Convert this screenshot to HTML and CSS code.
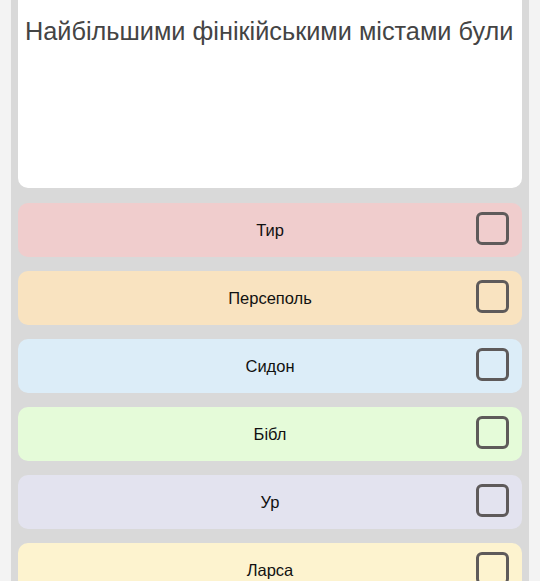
FILE: index.html
```html
<!DOCTYPE html>
<html lang="uk">
<head>
    <meta charset="UTF-8">
    <meta name="viewport" content="width=device-width, initial-scale=1.0">
    <title>Питання</title>
    <link rel="stylesheet" href="styles.css">
</head>
<body>

    <div class="panel">
        <div class="question">
            <p>Найбільшими фінікійськими містами були</p>
        </div>

        <div class="answers">
            <div class="answer red">
                <span>Тир</span>
                <i class="check"></i>
            </div>
            <div class="answer orange">
                <span>Персеполь</span>
                <i class="check"></i>
            </div>
            <div class="answer blue">
                <span>Сидон</span>
                <i class="check"></i>
            </div>
            <div class="answer green">
                <span>Бібл</span>
                <i class="check"></i>
            </div>
            <div class="answer purple">
                <span>Ур</span>
                <i class="check"></i>
            </div>
            <div class="answer yellow">
                <span>Ларса</span>
                <i class="check"></i>
            </div>
        </div>
    </div>

</body>
</html>
```

FILE: styles.css
```css
body {
    font-family: 'Liberation Sans', Arial, sans-serif;
    background-color: #f3f3f3;
    margin: 0;
    padding: 0;
}

.panel {
    margin: 0 11px;
    padding: 0 7px 20px;
    background-color: #d9d9d9;
}

.question {
    height: 188px;
    box-sizing: border-box;
    padding: 16px 4px 0 7px;
    background-color: #ffffff;
    border-radius: 0 0 10px 10px;
}

.question p {
    margin: 0;
    font-size: 25.3px;
    line-height: 30px;
    color: #444444;
    white-space: nowrap;
}

.answers {
    display: flex;
    flex-direction: column;
    gap: 14px;
    padding-top: 15px;
}

.answer {
    position: relative;
    height: 54px;
    border-radius: 10px;
    display: flex;
    justify-content: center;
    align-items: center;
    font-size: 16.5px;
    color: #111111;
}

.check {
    position: absolute;
    right: 13px;
    top: 9px;
    width: 27px;
    height: 27px;
    border: 3px solid #5e5a5a;
    border-radius: 6px;
}

.red { background-color: #f0cdcd; }
.orange { background-color: #f9e3c0; }
.blue { background-color: #dcedf8; }
.green { background-color: #e5fbd9; }
.purple { background-color: #e3e3ef; }
.yellow { background-color: #fdf3cf; }
```
